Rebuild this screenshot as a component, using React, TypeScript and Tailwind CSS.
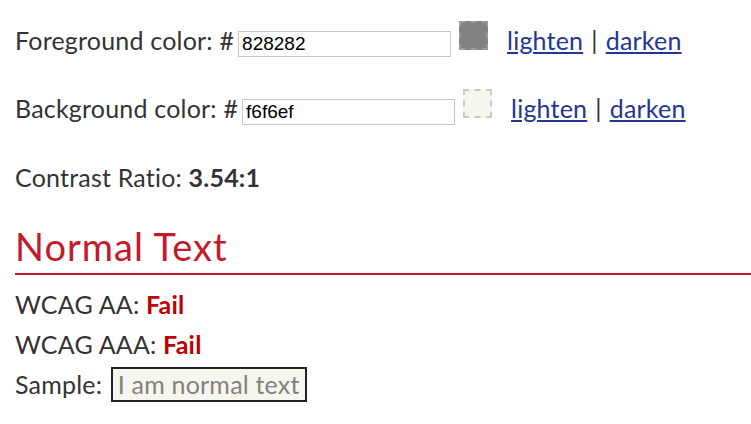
import React from 'react';

const swatchBorder = 'border-2 border-dashed';

function ColorRow({ label, value, swatch, className }: { label: string; value: string; swatch: string; className: string }) {
  return (
    <div className={`flex items-baseline leading-[28px] ${className}`}>
      <span>{label}</span>
      <input
        readOnly
        value={value}
        className="ml-[4px] w-[213px] h-[26px] border border-[#c8c8c8] px-[3px] text-[19px] tracking-normal text-black font-['Liberation_Sans',Arial,sans-serif] outline-none"
      />
      <div className={`ml-[8px] w-[29px] h-[29px] ${swatchBorder} ${swatch}`}></div>
      <a href="#" className="ml-[19px] text-[#24368f] underline">lighten</a>
      <span className="mx-[8px]">|</span>
      <a href="#" className="text-[#24368f] underline">darken</a>
    </div>
  );
}

export default function App() {
  return (
    <div className="min-h-screen bg-white pl-[15px] pt-[21px] text-[25px] tracking-[0.2px] text-[#333] font-['Lato','Open_Sans',sans-serif]">
      <ColorRow label="Foreground color: #" value="828282" swatch="bg-[#828282] border-[#9a9a9a]" className="" />
      <ColorRow label="Background color: #" value="f6f6ef" swatch="bg-[#f6f6ef] border-[#c8c8c8]" className="mt-[32px]" />

      <p className="mt-[38px] leading-[28px]">
        Contrast Ratio: <b className="font-bold">3.54:1</b>
      </p>

      <h2 className="mt-[35px] pb-[7px] text-[38px] tracking-[1px] leading-[40px] text-[#c41a2a] border-b-2 border-[#c41a2a]">
        Normal Text
      </h2>

      <div className="mt-[9px] leading-[40px]">
        <p>WCAG AA: <b className="font-bold text-[#c00000]">Fail</b></p>
        <p>WCAG AAA: <b className="font-bold text-[#c00000]">Fail</b></p>
        <p>
          Sample:{' '}
          <span className="ml-[2px] inline-block leading-[31px] border-2 border-[#222] bg-[#f6f6ef] text-[#828282] px-[5px]">
            I am normal text
          </span>
        </p>
      </div>
    </div>
  );
}
